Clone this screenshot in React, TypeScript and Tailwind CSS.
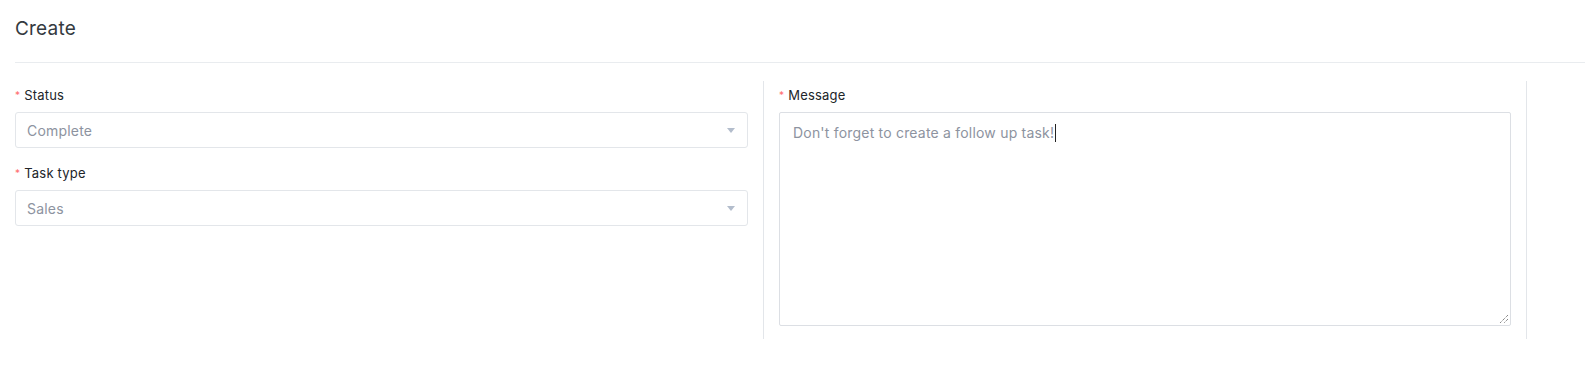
import { ReactNode } from "react";

const font = { fontFamily: "Inter, 'Open Sans', sans-serif" };

function Label({ children }: { children: ReactNode }) {
  return (
    <div className="flex h-[20px] items-center text-[13px] tracking-[0.2px] text-[#212529]">
      <span className="mr-[4px] -mt-[3px] text-[10px] leading-none text-[#ff6b6b]">*</span>
      {children}
    </div>
  );
}

function Select({ value }: { value: string }) {
  return (
    <div className="mt-[6px] flex h-[36px] items-center justify-between rounded-[3px] border border-[#e3e6ea] bg-white pl-[11px] pr-[12px]">
      <span className="text-[14px] tracking-[0.2px] text-[#8d93a0]">{value}</span>
      <span className="h-0 w-0 border-x-[4.5px] border-t-[5px] border-x-transparent border-t-[#b3bdcc]" />
    </div>
  );
}

export default function App() {
  return (
    <div className="min-h-[391px] bg-white" style={font}>
      <div className="pl-[15px]">
        <h1 className="pt-[15px] pb-[19px] text-[19px] leading-[28px] font-normal tracking-[0.2px] text-[#343a40]">Create</h1>
        <div className="border-t border-[#e9ecef]" />
      </div>

      <div className="mt-[18px] flex">
        <div className="w-[764px] border-r border-[#e3e6ea] px-[15px] pt-[5px]">
          <Label>Status</Label>
          <Select value="Complete" />
          <div className="mt-[16px]">
            <Label>Task type</Label>
            <Select value="Sales" />
          </div>
        </div>

        <div className="w-[763px] border-r border-[#e3e6ea] px-[15px] pt-[5px] pb-[13px]">
          <Label>Message</Label>
          <div className="relative mt-[6px] h-[214px] rounded-[2px] border border-[#dcdfe4] bg-white px-[13px] pt-[7px]">
            <span className="text-[14px] leading-[20px] tracking-[0.2px] text-[#8d93a0]">
              Don't forget to create a follow up task!
              <span className="ml-[1px] inline-block h-[18px] w-[1px] translate-y-[4px] bg-[#222]" />
            </span>
            <svg className="absolute bottom-[1px] right-[1px]" width="11" height="11" viewBox="0 0 11 11">
              <path d="M10 2 L2 10 M10 6 L6 10" stroke="#555" strokeWidth="1" strokeDasharray="1 1" fill="none" />
            </svg>
          </div>
        </div>
      </div>
    </div>
  );
}
